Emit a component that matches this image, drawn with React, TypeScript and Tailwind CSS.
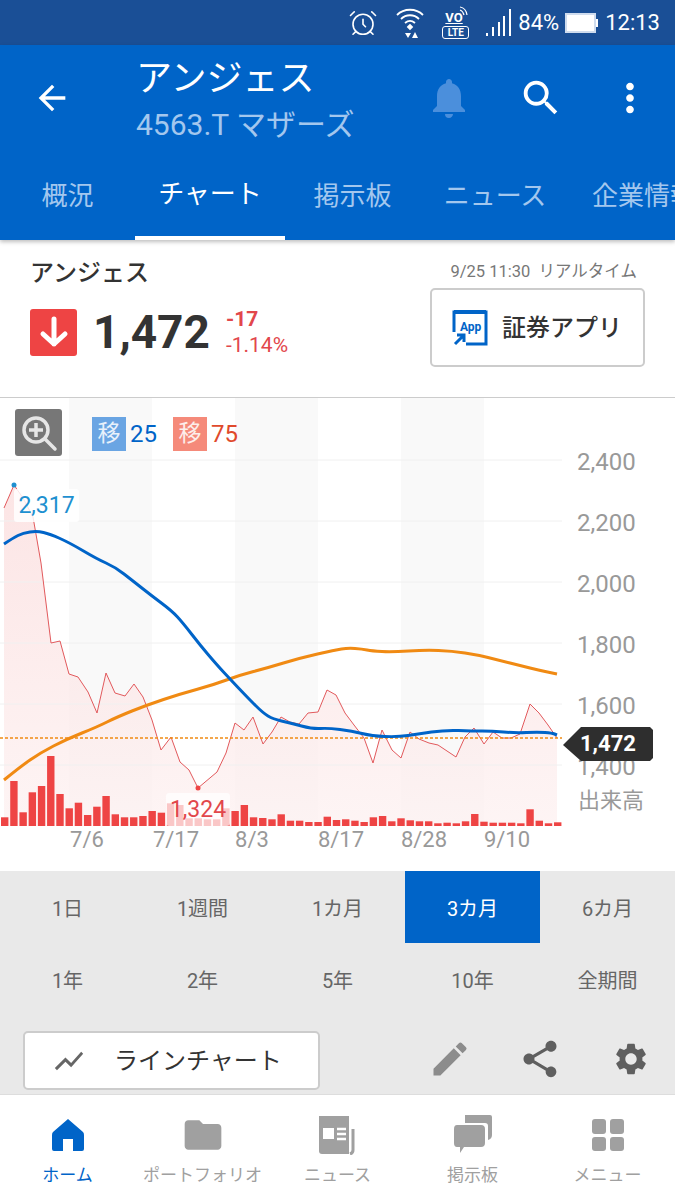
import React from 'react'
import { MdArrowBack, MdNotifications, MdSearch, MdMoreVert, MdFolder, MdEdit, MdShare, MdSettings, MdShowChart } from 'react-icons/md'
import { AlarmClock } from 'lucide-react'

const PRICE: number[][] = [
	[4, 508], [14, 485], [23, 498], [33, 517], [41, 563], [51, 643], [60, 641], [69, 674], [78, 677], [88, 692], [97, 713],
	[106, 673], [115, 693], [125, 696], [134, 684], [143, 697], [152, 720], [161, 750], [171, 737], [180, 762], [189, 770],
	[198, 788], [217, 772], [226, 753], [235, 723], [244, 730], [253, 717], [263, 744], [272, 732], [281, 717], [290, 722],
	[299, 724], [308, 713], [318, 712], [327, 690], [336, 695], [345, 713], [354, 725], [364, 738], [373, 763], [382, 730],
	[392, 750], [401, 758], [410, 732], [419, 739], [429, 743], [438, 745], [447, 751], [456, 757], [465, 737], [474, 728],
	[484, 744], [493, 732], [502, 738], [511, 738], [520, 734], [530, 704], [539, 713], [548, 725], [557, 738],
]

const MA25: number[][] = [
	[4, 544], [13, 538], [23, 533], [37, 531], [50, 534], [70, 543], [97, 559], [115, 567], [133, 581], [152, 596], [172, 611],
	[183, 623], [200, 645], [217, 665], [230, 679], [247, 697], [263, 713], [273, 719], [290, 723], [313, 729], [328, 728],
	[352, 731], [372, 736], [398, 737], [418, 734], [445, 730], [472, 731], [492, 731], [515, 733], [538, 732], [552, 733], [557, 735],
]

const MA75: number[][] = [
	[4, 780], [20, 767], [40, 753], [67, 739], [97, 727], [117, 717], [147, 705], [180, 694], [213, 685], [240, 675], [267, 668],
	[300, 658], [335, 650], [348, 648], [362, 649], [372, 651], [392, 652], [425, 650], [452, 651], [478, 655], [498, 660],
	[522, 666], [538, 670], [557, 674],
]

const VOLUME = [
	8.7, 45, 13.7, 33.7, 40, 70, 32, 17.7, 23.3, 11, 19.3, 30, 11.7, 8.7, 8.7, 10, 15, 13.3, 22.7, 21, 7.7, 7.7, 6.7, 6.7, 17.7,
	15, 21, 8.7, 8, 6.7, 11.7, 5.3, 5.3, 4, 4, 9.3, 6, 6.7, 5.3, 4, 8.7, 10, 4.7, 7.7, 5.7, 4.7, 4.7, 2.7, 3.3, 2.7, 4.7, 12,
	4.3, 3.3, 3.3, 3.3, 2.7, 16.7, 5.3, 2.7, 3.7,
]

const toPoints = (pts: number[][]) => pts.map(p => p.join(',')).join(' ')

// moving averages are smooth in the app, so run a quadratic through the midpoints
const toSmoothPath = (pts: number[][]) => {
	let d = `M${pts[0][0]},${pts[0][1]}`
	for (let i = 1; i < pts.length - 1; i++) {
		const midX = (pts[i][0] + pts[i + 1][0]) / 2
		const midY = (pts[i][1] + pts[i + 1][1]) / 2
		d += ` Q${pts[i][0]},${pts[i][1]} ${midX},${midY}`
	}
	const last = pts[pts.length - 1]
	return d + ` L${last[0]},${last[1]}`
}

const TOP = 398
const BASE = 826

const TABS = [
	{ label: '概況', className: 'w-[135px] justify-center text-[#a3c7ee]' },
	{ label: 'チャート', className: 'w-[150px] justify-center text-white border-b-4 border-white' },
	{ label: '掲示板', className: 'w-[135px] justify-center text-[#a3c7ee]' },
	{ label: 'ニュース', className: 'w-[150px] justify-center text-[#a3c7ee]' },
	{ label: '企業情報', className: 'w-[105px] pl-[22px] text-[#a3c7ee] whitespace-nowrap' },
]
const PERIODS = ['1日', '1週間', '1カ月', '3カ月', '6カ月', '1年', '2年', '5年', '10年', '全期間']

const StatusBar = () => (
	<div className="h-[45px] bg-[#1a4f96] flex items-center justify-end pr-[15px] text-white text-[22px]">
		<AlarmClock size={30} strokeWidth={1.3} className="mr-[18px]" />
		<svg width="28" height="34" viewBox="0 0 28 34" className="mr-[18px]" fill="none" stroke="white" strokeWidth="1.8">
			<path d="M1 9 C8 2 20 2 27 9" />
			<path d="M5 13 C10 8 18 8 23 13" />
			<path d="M9 17 C12 14.5 16 14.5 19 17" />
			<path d="M12 21 L14 19 L16 21 L14 23 Z" fill="white" />
			<path d="M9 27 h6 l-3 5 Z M19 26 l3 6 h-6 Z" fill="white" stroke="none" />
		</svg>
		<div className="relative mr-[16px] w-[27px] flex flex-col items-center leading-none pt-[4px]">
			<span className="text-[13px] font-bold leading-[15px] underline self-start pl-[3px]">VO</span>
			<span className="text-[10px] font-bold border border-white rounded-[3px] w-[27px] text-center leading-[11px] mt-[1px]">LTE</span>
			<svg width="10" height="10" viewBox="0 0 10 10" className="absolute right-0 top-0" fill="none" stroke="white" strokeWidth="1.2">
				<path d="M1 1 Q7 2 8 9 M1 4 Q4 5 5 9" />
			</svg>
		</div>
		<svg width="26" height="30" viewBox="0 0 26 30" className="mr-[7px]" fill="white">
			<rect x="1" y="25" width="2" height="3" />
			<rect x="7" y="19" width="2" height="9" />
			<rect x="13" y="14" width="2" height="14" />
			<rect x="18" y="8" width="2" height="20" />
			<rect x="24" y="1" width="2" height="27" />
		</svg>
		<span className="mr-[6px]">84%</span>
		<div className="mr-[7px] flex items-center">
			<div className="w-[31px] h-[20px] border-2 border-[#cfdcee] bg-white" />
			<div className="w-[2px] h-[8px] bg-white" />
		</div>
		<span>12:13</span>
	</div>
)

const Header = () => (
	<div className="bg-[#0064c8] h-[195px] relative z-10 shadow-[0_2px_4px_rgba(0,0,0,0.25)]">
		<div className="h-[105px] flex">
			<div className="w-[136px] flex items-center pl-[32px] pt-[1px]">
				<MdArrowBack size={40} color="white" />
			</div>
			<div className="w-[286px] pt-[9px]">
				<div className="text-[36px] leading-[50px] text-white">アンジェス</div>
				<div className="text-[30px] leading-[42px] text-[#a3c7ee]">4563.T マザーズ</div>
			</div>
			<div className="flex-1 flex items-center">
				<MdNotifications size={48} color="#4b8fdc" className="ml-[3px]" />
				<MdSearch size={46} color="white" className="ml-[45px]" />
				<MdMoreVert size={46} color="white" className="ml-[43px]" />
			</div>
		</div>
		<div className="h-[90px] flex overflow-hidden">
			{TABS.map(tab => (
				<div key={tab.label} className={`shrink-0 flex items-center h-[90px] pt-[2px] text-[26px] ${tab.className}`}>
					{tab.label}
				</div>
			))}
		</div>
	</div>
)

const Quote = () => (
	<div className="h-[158px] border-b border-[#cccccc] bg-white flex justify-between pl-[30px] pr-[30px]">
		<div>
			<div className="text-[24px] leading-[34px] mt-[16px] font-medium text-[#333333]">アンジェス</div>
			<div className="flex items-center mt-[14px]">
				<div className="w-[47px] h-[47px] bg-[#ee4444] rounded-[3px] flex items-center justify-center">
					<svg width="30" height="32" viewBox="0 0 30 32" fill="none" stroke="white" strokeWidth="5" strokeLinecap="round" strokeLinejoin="round">
						<path d="M15 3 V28 M4 18 L15 28 L26 18" />
					</svg>
				</div>
				<div className="text-[46px] leading-[56px] font-bold text-[#333333] ml-[16px]">1,472</div>
				<div className="ml-[16px] text-[#e2474b] text-[21px] leading-[26px]">
					<div className="font-bold">-17</div>
					<div>-1.14%</div>
				</div>
			</div>
		</div>
		<div className="flex flex-col items-end">
			<div className="text-[16.5px] leading-[24px] text-[#777777] mt-[20px] mr-[8px]">9/25 11:30&nbsp; リアルタイム</div>
			<div className="w-[215px] h-[79px] mt-[4px] bg-white border-2 border-[#cccccc] rounded-[5px] flex items-center pl-[20px]">
				<svg width="36" height="36" viewBox="0 0 36 36" fill="none">
					<path d="M2 22 V2 H34 V34 H14" stroke="#0064c8" strokeWidth="3" />
					<path d="M2 2 H34" stroke="#0064c8" strokeWidth="4" />
					<text x="8" y="21" fontSize="12" fontWeight="700" fill="#0064c8">App</text>
					<path d="M3 34 L11 26 M5 25 H12 V32" stroke="#0064c8" strokeWidth="3" />
				</svg>
				<span className="text-[24px] font-medium text-[#333333] ml-[14px]">証券アプリ</span>
			</div>
		</div>
	</div>
)

const Chart = () => (
	<div className="relative h-[473px] bg-white">
		<svg width="675" height="473" viewBox={`0 ${TOP} 675 473`} className="block">
			<defs>
				<linearGradient id="area" x1="0" y1="485" x2="0" y2={BASE} gradientUnits="userSpaceOnUse">
					<stop offset="0" stopColor="#fbdcdc" />
					<stop offset="1" stopColor="#fdf1f1" />
				</linearGradient>
			</defs>
			{[69, 235, 401].map(x => (
				<rect key={x} x={x} y={TOP} width="83" height={BASE - TOP} fill="#f9f9f9" />
			))}
			<polygon points={`4,${BASE} ${toPoints(PRICE)} 557,${BASE}`} fill="url(#area)" opacity="0.75" />
			{[460, 521, 582, 643, 704, 765].map(y => (
				<line key={y} x1="0" x2="562" y1={y} y2={y} stroke="#f0f0f0" strokeWidth="1" />
			))}
			{VOLUME.map((h, i) => (
				<rect key={i} x={1 + i * 9.217} y={BASE - h} width="7.4" height={h} fill="#ee4444" />
			))}
			<polyline points={toPoints(PRICE)} fill="none" stroke="#e2595c" strokeWidth="1" />
			<line x1="0" x2="562" y1="738" y2="738" stroke="#f08a13" strokeWidth="1.5" strokeDasharray="3 2" />
			<path d={toSmoothPath(MA75)} fill="none" stroke="#f08a13" strokeWidth="3" />
			<path d={toSmoothPath(MA25)} fill="none" stroke="#0064c8" strokeWidth="3" />
			<circle cx="14" cy="485" r="2.5" fill="#1e90d0" />
			<circle cx="198" cy="788" r="2.5" fill="#ee4444" />
			<g fill="#999999" fontSize="24">
				{['2,400', '2,200', '2,000', '1,800', '1,600', '1,400'].map((label, i) => (
					<text key={label} x="577" y={470 + i * 61}>{label}</text>
				))}
				<text x="578" y="808" fontSize="22">出来高</text>
			</g>
			<g fill="#999999" fontSize="22" textAnchor="middle">
				{[['7/6', 87], ['7/17', 176], ['8/3', 252], ['8/17', 341], ['8/28', 424], ['9/10', 507]].map(([label, x]) => (
					<text key={label} x={x} y="847">{label}</text>
				))}
			</g>
			<polygon points="563,745 581,727 650,727 653,730 653,758 650,761 581,761" fill="#2e2e2e" />
		</svg>

		<div className="absolute left-[15px] top-[11px] w-[47px] h-[47px] bg-[#777777] rounded-[3px] flex items-center justify-center">
			<svg width="38" height="38" viewBox="0 0 38 38" fill="none" stroke="#e6e6e6" strokeWidth="3.5">
				<circle cx="16" cy="16" r="12" />
				<path d="M16 9 V23 M9 16 H23" />
				<path d="M25 25 L35 35" strokeLinecap="round" />
			</svg>
		</div>
		<div className="absolute left-[92px] top-[18px] flex items-center text-[24px]">
			<span className="w-[34px] h-[34px] bg-[#6aa5e3] text-[#e8f1fb] flex items-center justify-center text-[23px]">移</span>
			<span className="ml-[4px] w-[43px] text-[#0064c8]">25</span>
			<span className="w-[34px] h-[34px] bg-[#f58a7a] text-[#fdeeea] flex items-center justify-center text-[23px]">移</span>
			<span className="ml-[4px] text-[#e04a2c]">75</span>
		</div>

		<div className="absolute left-[14px] top-[91px] w-[65px] h-[33px] bg-white/85 rounded-[3px] text-[#1e90d0] text-[23px] leading-[33px] text-center">2,317</div>
		<div className="absolute left-[166px] top-[395px] w-[64px] h-[33px] bg-white/70 rounded-[3px] text-[#e2474b] text-[23px] leading-[33px] text-center">1,324</div>
		<div className="absolute left-[580px] top-[329px] w-[70px] h-[34px] text-white text-[22px] font-bold leading-[34px]">1,472</div>
	</div>
)

const Periods = () => (
	<div className="grid grid-cols-5 bg-[#e9e9e9]">
		{PERIODS.map((period, i) => (
			<div
				key={period}
				className={`h-[72px] flex items-center justify-center pt-[3px] text-[20px] ${i === 3 ? 'bg-[#0064c8] text-white' : 'text-[#666666]'}`}
			>
				{period}
			</div>
		))}
	</div>
)

const Toolbar = () => (
	<div className="h-[79px] bg-[#e9e9e9] flex items-start pl-[23px] pt-[16px]">
		<div className="w-[297px] h-[59px] bg-white border-2 border-[#cccccc] rounded-[5px] flex items-center pl-[27px]">
			<MdShowChart size={34} color="#666666" />
			<span className="text-[24px] text-[#333333] ml-[28px]">ラインチャート</span>
		</div>
		<MdEdit size={44} color="#8c8c8c" className="ml-[108px] mt-[6px]" />
		<MdShare size={44} color="#5f5f5f" className="ml-[46px] mt-[6px]" />
		<MdSettings size={38} color="#5f5f5f" className="ml-[50px] mt-[9px]" />
	</div>
)

const NavIcon = ({ index }: { index: number }) => {
	if (index === 0)
		return (
			<svg width="32" height="32" viewBox="0 0 32 32" fill="#0064c8">
				<path d="M16 0 L31 13 Q32 14 32 16 V30 Q32 32 30 32 H21 V20 H11 V32 H2 Q0 32 0 30 V16 Q0 14 1 13 Z" />
			</svg>
		)
	if (index === 1) return <MdFolder size={44} color="#a0a0a0" />
	if (index === 2)
		return (
			<svg width="40" height="40" viewBox="0 0 40 40">
				<path d="M1 1 H31 V39 H4 Q1 39 1 36 Z" fill="#a0a0a0" />
				<rect x="5" y="13" width="11" height="11" fill="white" />
				<path d="M19 14 H28 M19 19 H28 M19 24 H28" stroke="white" strokeWidth="2.5" />
				<path d="M35 14 V35 Q35 38 32 39" stroke="#a0a0a0" strokeWidth="3" fill="none" />
			</svg>
		)
	if (index === 3)
		return (
			<svg width="40" height="42" viewBox="0 0 40 42" fill="#a0a0a0">
				<path d="M12 1 H37 Q39 1 39 3 V21 Q39 25 35 26 V12 Q35 9 32 9 H12 Z" />
				<path d="M4 11 H28 Q32 11 32 15 V29 Q32 33 28 33 H11 L7 39 V33 H4 Q1 33 1 29 V15 Q1 11 4 11 Z" />
			</svg>
		)
	return (
		<svg width="34" height="34" viewBox="0 0 34 34" fill="#a0a0a0">
			<rect x="1" y="1" width="14" height="15" rx="3" />
			<rect x="19" y="1" width="14" height="15" rx="3" />
			<rect x="1" y="19" width="14" height="14" rx="3" />
			<rect x="19" y="19" width="14" height="14" rx="3" />
		</svg>
	)
}

const BottomNav = () => (
	<div className="flex-1 bg-white grid grid-cols-5 border-t border-[#dddddd]">
		{['ホーム', 'ポートフォリオ', 'ニュース', '掲示板', 'メニュー'].map((label, i) => (
			<div key={label} className="relative flex flex-col items-center">
				<div className="h-[54px] mt-[13px] flex items-center justify-center">
					<NavIcon index={i} />
				</div>
				<span className={`text-[17px] leading-[24px] mt-[1px] ${i === 0 ? 'text-[#0064c8]' : 'text-[#a0a0a0]'}`}>{label}</span>
			</div>
		))}
	</div>
)

export default function App() {
	return (
		<div className="w-[675px] h-[1200px] overflow-hidden flex flex-col bg-white font-['Roboto','Noto_Sans_CJK_JP',sans-serif]">
			<StatusBar />
			<Header />
			<Quote />
			<Chart />
			<Periods />
			<Toolbar />
			<BottomNav />
		</div>
	)
}
